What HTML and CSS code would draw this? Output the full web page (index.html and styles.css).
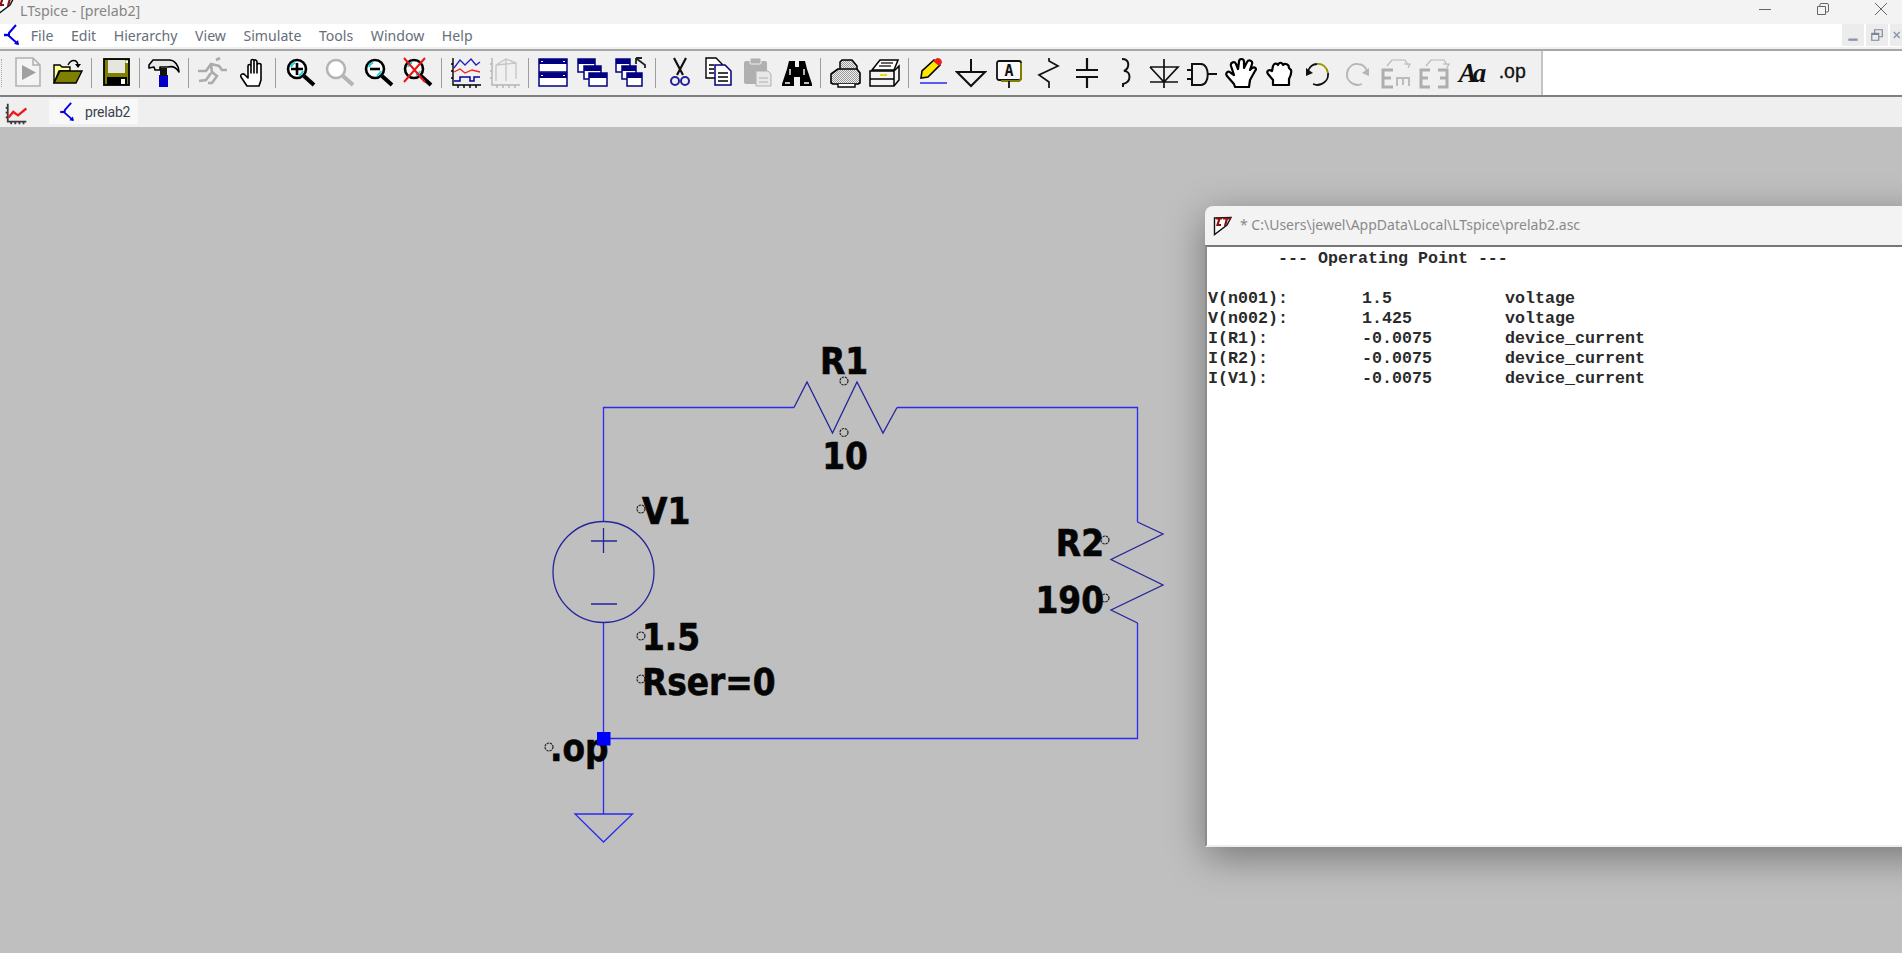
FILE: index.html
```html
<!DOCTYPE html>
<html lang="en">
<head>
<meta charset="utf-8">
<title>LTspice - [prelab2]</title>
<link rel="stylesheet" href="styles.css">
</head>
<body>
<svg class="defs" width="0" height="0" aria-hidden="true">
  <defs>
    <pattern id="dither" width="2" height="2" patternUnits="userSpaceOnUse">
      <rect width="2" height="2" fill="#eee"/>
      <rect width="1" height="1" fill="#999"/>
      <rect x="1" y="1" width="1" height="1" fill="#999"/>
    </pattern>
    <symbol id="transistor" viewBox="0 0 16 22">
      <path d="M0 11 H5" fill="none" stroke="#0000e0" stroke-width="2.4"/>
      <path d="M12 1 L5 9 V12 L14 20" fill="none" stroke="#0000e0" stroke-width="2"/>
      <path d="M10 20 L15 21 L14 16 Z" fill="#0000e0"/>
    </symbol>
    <symbol id="lt-logo" viewBox="0 0 20 20">
      <path d="M1.5 2 V18.5 L14 9 L18 1.5 Z" fill="#fff" stroke="#111" stroke-width="1.4"/>
      <path d="M3 2.5 H9 M6.5 2.5 L4.5 9 H8 M10 2.5 H18 M14 2.5 L12 10" fill="none" stroke="#8a1010" stroke-width="2.2"/>
    </symbol>
    <symbol id="lens" viewBox="0 0 32 32">
      <circle cx="13" cy="12" r="9" fill="#fff" stroke="currentColor" stroke-width="2.6"/>
      <path d="M20 19 L30 28" stroke="currentColor" stroke-width="4" fill="none"/>
    </symbol>
    <symbol id="glint" viewBox="0 0 32 32">
      <path d="M7 10 A7 7 0 0 1 11 5.5 M19 14 A7 7 0 0 1 15 18.5" fill="none" stroke="#16d8d8" stroke-width="2"/>
    </symbol>
    <symbol id="hand-open" viewBox="0 0 32 32">
      <path d="M9 29 L3 20 C2 17 5 16 7 18 L10 21 V9 C10 7 13 7 13 9 V16 V4 C13 2 16 2 16 4 V16 V4 C16 2 19 3 19 5 V16 V8 C19 6 23 6 23 8 V23 L21 29 Z" fill="#fff" stroke="#000" stroke-width="1.6" stroke-linejoin="round"/>
    </symbol>
    <symbol id="axes" viewBox="0 0 32 32">
      <path d="M3 1 V28 H31 M3 7 H1 M3 14 H1 M3 21 H1 M8 28 V31 M14 28 V31 M20 28 V31 M26 28 V31" fill="none" stroke="currentColor" stroke-width="1.4"/>
    </symbol>
  </defs>
</svg>

<header class="titlebar">
  <svg class="app-logo" viewBox="0 0 20 20"><use href="#lt-logo"/></svg>
  <span class="app-title">LTspice - [prelab2]</span>
  <div class="win-controls">
    <svg class="win-btn" viewBox="0 0 12 12"><path d="M0 6.5 H12" stroke="#666" fill="none"/></svg>
    <svg class="win-btn" viewBox="0 0 12 12"><path d="M.5 3.5 H8.5 V11.5 H.5 Z M3 3 V1.5 Q3 .5 4 .5 H10 Q11.5 .5 11.5 2 V8 Q11.5 9 10 9 H9" stroke="#666" fill="none"/></svg>
    <svg class="win-btn" viewBox="0 0 12 12"><path d="M0 0 L12 12 M12 0 L0 12" stroke="#666" fill="none"/></svg>
  </div>
</header>

<nav class="menubar">
  <svg class="menu-logo"><use href="#transistor"/></svg>
  <span class="menu-item">File</span>
  <span class="menu-item">Edit</span>
  <span class="menu-item">Hierarchy</span>
  <span class="menu-item">View</span>
  <span class="menu-item">Simulate</span>
  <span class="menu-item">Tools</span>
  <span class="menu-item">Window</span>
  <span class="menu-item">Help</span>
  <div class="mdi-controls">
    <span class="mdi-btn"><svg viewBox="0 0 12 12"><path d="M2 10 H10" stroke="#8b97a8" stroke-width="2"/></svg></span>
    <span class="mdi-btn"><svg viewBox="0 0 12 12"><path d="M1.5 4.5 H7.5 V10.5 H1.5 Z M1.5 5.5 H7.5 M4 4 V1.5 H10.5 V7.5 H8" stroke="#7b8798" fill="none"/></svg></span>
    <span class="mdi-btn mdi-close"><svg viewBox="0 0 12 12"><path d="M1 2 L9 10 M9 2 L1 10" stroke="#8b97a8" stroke-width="2"/></svg></span>
  </div>
</nav>

<div class="toolbar">
  <div class="tools">
    <span class="grip"></span>
    <span class="btn"><svg viewBox="0 0 32 32"><path d="M4 1 H21 L28 8 V29 H4 Z M21 1 V8 H28" fill="#f4f4f4" stroke="#b0b0b0" stroke-width="1.5"/><path d="M10 8 L24 15.5 L10 23 Z" fill="#a0a0a0"/></svg></span>
    <span class="btn"><svg viewBox="0 0 32 32"><path d="M3 26 V8 H9 L11 10 H19 V14 H8 Z" fill="#ffff99" stroke="#000" stroke-width="1.4"/><path d="M3 26 L9 14 H31 L25 26 Z" fill="#808000" stroke="#000" stroke-width="1.4"/><path d="M17 8 C20 2 26 2 27 8" fill="none" stroke="#000" stroke-width="1.4"/><path d="M24 7 L30 7 L27 11 Z" fill="#000"/></svg></span>
    <span class="sep"></span>
    <span class="btn"><svg viewBox="0 0 32 32"><rect x="4" y="2" width="25" height="26" fill="#808000" stroke="#000" stroke-width="1.8"/><rect x="8" y="3" width="17" height="13" fill="#e6e6e0"/><rect x="25.5" y="3.5" width="2.5" height="2.5" fill="#fff"/><rect x="7" y="20" width="20" height="8" fill="#000"/><rect x="21" y="22" width="4" height="5" fill="#fff"/></svg></span>
    <span class="sep"></span>
    <span class="btn"><svg viewBox="0 0 32 32"><rect x="11" y="18" width="9" height="12" fill="#0000c8"/><rect x="12" y="11" width="7" height="8" fill="#111"/><path d="M1 8 L5 3 H21 C27 3 31 9 31 15 C28 10 24 9 20 10 H12 V13 H7 L6 10 L1 11 Z" fill="#e8e8e8" stroke="#000" stroke-width="1.6" stroke-linejoin="round"/></svg></span>
    <span class="sep"></span>
    <span class="btn"><svg viewBox="0 0 32 32"><path d="M1 14 L9 14 L14 7 L22 9 L25 13 H30 M19 3 L23 1 M14 8 L15 15 L20 19 L15 26 L11 26 M14 16 L9 23 L2 24" fill="none" stroke="#ababab" stroke-width="2.6"/></svg></span>
    <span class="btn"><svg viewBox="-2 0 32 32"><use href="#hand-open" width="32" height="32"/></svg></span>
    <span class="sep"></span>
    <span class="btn btn-black"><svg viewBox="0 0 32 32"><use href="#lens"/><use href="#glint"/><path d="M7 12 H19 M13 6 V18" stroke="#000" stroke-width="2.6"/></svg></span>
    <span class="btn btn-gray"><svg viewBox="0 0 32 32"><use href="#lens"/></svg></span>
    <span class="btn btn-black"><svg viewBox="0 0 32 32"><use href="#lens"/><use href="#glint"/><path d="M8 12 H18" stroke="#000" stroke-width="2.6"/></svg></span>
    <span class="btn btn-black"><svg viewBox="0 0 32 32"><use href="#lens"/><use href="#glint"/><path d="M3 1 L24 25 M24 1 L3 25" stroke="#f01010" stroke-width="2"/></svg></span>
    <span class="sep"></span>
    <span class="btn btn-black"><svg viewBox="0 0 32 32"><use href="#axes"/><path d="M4 11 L10 3 L15 8 L21 2 L26 8 L30 5" fill="none" stroke="#2020c0" stroke-width="1.3"/><path d="M4 15 L10 12 L15 16 L22 13 L30 15" fill="none" stroke="#f02020" stroke-width="1.3"/><path d="M4 24 H10 V20 H20 V24 H24 V20 H30" fill="none" stroke="#0000a0" stroke-width="1.5"/></svg></span>
    <span class="btn btn-gray"><svg viewBox="0 0 32 32"><use href="#axes"/><path d="M7 24 V8 L17 2 L27 6 V22 M7 8 L27 6 M17 2 V24" fill="none" stroke="#c4c4c4" stroke-width="1.3"/></svg></span>
    <span class="sep"></span>
    <span class="btn"><svg viewBox="0 0 32 32"><rect x="2" y="2" width="28" height="13" fill="#fff" stroke="#000080" stroke-width="1.5"/><rect x="2" y="16" width="28" height="13" fill="#fff" stroke="#000080" stroke-width="1.5"/><rect x="2" y="2" width="28" height="5" fill="#000080"/><rect x="2" y="16" width="28" height="5" fill="#000080"/><path d="M4 4.5 H6 M26 4.5 H28 M4 18.5 H6 M26 18.5 H28" stroke="#fff"/></svg></span>
    <span class="btn"><svg viewBox="0 0 32 32"><rect x="2" y="2" width="17" height="13" fill="#fff" stroke="#000080" stroke-width="1.5"/><rect x="2" y="2" width="17" height="5" fill="#000080"/><rect x="8" y="9" width="17" height="13" fill="#fff" stroke="#000080" stroke-width="1.5"/><rect x="8" y="9" width="17" height="5" fill="#000080"/><rect x="13" y="16" width="18" height="13" fill="#fff" stroke="#000080" stroke-width="1.5"/><rect x="13" y="16" width="18" height="5" fill="#000080"/></svg></span>
    <span class="btn"><svg viewBox="0 0 32 32"><rect x="1" y="2" width="14" height="13" fill="#fff" stroke="#000080" stroke-width="1.5"/><rect x="1" y="2" width="14" height="5" fill="#000080"/><rect x="7" y="9" width="14" height="13" fill="#fff" stroke="#000080" stroke-width="1.5"/><rect x="7" y="9" width="14" height="5" fill="#000080"/><rect x="12" y="16" width="15" height="13" fill="#fff" stroke="#000080" stroke-width="1.5"/><rect x="12" y="16" width="15" height="5" fill="#000080"/><path d="M30 11 L30 8 L22 2 M21 1 H27 M21 1 V7" fill="none" stroke="#222" stroke-width="1.8"/></svg></span>
    <span class="sep"></span>
    <span class="btn"><svg viewBox="0 0 32 32"><path d="M10 1 L19 18 M22 1 L13 18" fill="none" stroke="#111" stroke-width="2.2"/><circle cx="11" cy="24" r="4" fill="none" stroke="#2020a0" stroke-width="2"/><circle cx="21" cy="24" r="4" fill="none" stroke="#2020a0" stroke-width="2"/></svg></span>
    <span class="btn"><svg viewBox="0 0 32 32"><path d="M3 1 H13 L19 7 V21 H3 Z" fill="#fff" stroke="#000" stroke-width="1.4"/><path d="M6 8 H11 M6 12 H11 M6 16 H11" stroke="#000" stroke-width="1.3"/><path d="M12 8 H22 L28 14 V28 H12 Z" fill="#fff" stroke="#000080" stroke-width="1.5"/><path d="M15 16 H25 M15 20 H25 M15 24 H25" stroke="#000" stroke-width="1.3"/></svg></span>
    <span class="btn"><svg viewBox="0 0 32 32"><rect x="2" y="4" width="23" height="23" rx="2" fill="#b0b0b0"/><rect x="8" y="1" width="11" height="6" rx="1" fill="#b0b0b0" stroke="#f0f0f0"/><path d="M14 14 H26 L29 17 V29 H14 Z" fill="#e8e8e8" stroke="#b0b0b0"/><path d="M17 21 H26 M17 25 H26" stroke="#b0b0b0"/></svg></span>
    <span class="btn"><svg viewBox="0 0 32 32"><path d="M8 4 H14 V10 H18 V4 H24 L26 12 L31 27 V29 H19 V20 H13 V29 H1 V27 L6 12 Z" fill="#000"/><path d="M9 12 V18 M23 12 V18 M4 26 H9 M23 26 H28" stroke="#fff" stroke-width="1.4"/></svg></span>
    <span class="sep"></span>
    <span class="btn"><svg viewBox="0 0 32 32"><path d="M11 14 V5 L13 3 H23 L28 9 V15 Z" fill="url(#dither)" stroke="#000" stroke-width="1.5" stroke-linejoin="round"/><path d="M2 26 V17 L9 12 H28 L31 16 V26 L29 27 H4 Z" fill="url(#dither)" stroke="#000" stroke-width="1.6" stroke-linejoin="round"/><path d="M9 27 V30 H26 V27" fill="#fff" stroke="#000" stroke-width="1.4"/></svg></span>
    <span class="btn"><svg viewBox="0 0 32 32"><path d="M4 13 L12 3 H30 L26 13 Z" fill="#fff" stroke="#000" stroke-width="1.5"/><path d="M13 6 H25 M11 9 H23" stroke="#333" stroke-width="1.5"/><path d="M2 14 H26 L31 9 V23 L26 29 H2 Z M26 14 V29 M2 22 H26" fill="#f4f4f4" stroke="#000" stroke-width="1.5"/><path d="M12 18 H19" stroke="#e8d810" stroke-width="2"/></svg></span>
    <span class="sep"></span>
    <span class="btn btn-n"><svg viewBox="0 0 32 32"><path d="M5 21 L6 14 L18 3 L24 8 L12 20 Z" fill="#ffe800" stroke="#000" stroke-width="1.6"/><path d="M17 4 L21 1 Q26 1 26 6 L23 9 Z" fill="#f02020"/><path d="M4 26 H31" stroke="#1a1af0" stroke-width="1.4"/></svg></span>
    <span class="btn btn-n"><svg viewBox="0 0 32 32"><path d="M16 2 V15 M2 15 H30 L16 29 Z" fill="none" stroke="#111" stroke-width="2"/></svg></span>
    <span class="btn btn-n"><svg viewBox="0 0 32 32"><rect x="4" y="4" width="24" height="19" rx="2" fill="#f8f8f8" stroke="#111" stroke-width="1.8"/><path d="M28 6 V22 L26 24 H8" fill="none" stroke="#808000" stroke-width="2"/><text class="label-a" x="16" y="19" text-anchor="middle">A</text><path d="M16 24 V31" stroke="#111" stroke-width="1.8"/></svg></span>
    <span class="btn btn-n"><svg viewBox="0 0 32 32"><path d="M17 1 V4 L26 9 L7 18 L17 25 V31" fill="none" stroke="#111" stroke-width="1.7"/></svg></span>
    <span class="btn btn-n"><svg viewBox="0 0 32 32"><path d="M16 1 V13 M5 13 H27 M5 20 H27 M16 20 V31" fill="none" stroke="#111" stroke-width="2.2"/></svg></span>
    <span class="btn btn-n"><svg viewBox="0 0 32 32"><path d="M13 2 C21 2 21 11 15 14 C22 14 23 25 14 27 V30" fill="none" stroke="#111" stroke-width="2"/></svg></span>
    <span class="btn btn-n"><svg viewBox="0 0 32 32"><path d="M16 2 V31 M2 10 H30 L16 25 L2 10 M2 25 H30" fill="none" stroke="#111" stroke-width="1.7"/></svg></span>
    <span class="btn btn-n"><svg viewBox="0 0 32 32"><path d="M6 7 H15 C24 7 24 28 15 28 H6 Z" fill="none" stroke="#111" stroke-width="2"/><path d="M1 13 H6 M1 22 H6 M22 17 H31" stroke="#111" stroke-width="2"/></svg></span>
    <span class="btn btn-n"><svg viewBox="0 0 32 32"><path d="M10 30 L9 27 L2 19 C0 16 3 13 6 16 L9 18 L6 9 C5 5 10 4 11 7 L13 12 L14 5 C14 1 19 1 19 5 L19 11 L22 5 C24 2 28 4 27 7 L25 13 L27 11 C30 9 32 12 30 14 L25 23 L24 30 Z" fill="#fff" stroke="#000" stroke-width="2.2" stroke-linejoin="round"/></svg></span>
    <span class="btn btn-n"><svg viewBox="0 0 32 32"><path d="M9 28 V23 L4 17 C2 14 5 12 8 14 L9 9 C10 6 13 6 14 8 C15 5 18 5 19 8 C21 6 25 7 25 11 L27 13 C28 16 26 20 25 22 V28 Z" fill="#fff" stroke="#000" stroke-width="2.2" stroke-linejoin="round"/></svg></span>
    <span class="btn btn-n"><svg viewBox="0 0 32 32"><path d="M6 14 C8 9 12 7 15 7" fill="none" stroke="#111" stroke-width="1.8"/><path d="M15 7 C20 6 25 10 26 16" fill="none" stroke="#a09000" stroke-width="1.8"/><path d="M26 16 C27 23 21 28 15 28 L11 27" fill="none" stroke="#111" stroke-width="1.8"/><path d="M4 11 V19 L11 16 Z" fill="#111"/></svg></span>
    <span class="btn btn-n"><svg viewBox="0 0 32 32"><path d="M26 14 C24 9 20 7 17 7 C12 6 7 10 6 16 C5 23 11 28 17 28 L21 27" fill="none" stroke="#b4b4b4" stroke-width="1.8"/><path d="M28 11 V19 L21 16 Z" fill="#b4b4b4"/></svg></span>
    <span class="btn btn-n"><svg viewBox="0 0 32 32"><path d="M14 13 H4 V30 H14 M4 21 H12" fill="none" stroke="#aeaeae" stroke-width="3"/><path d="M18 29 V21 H30 V29 M24 21 V28" fill="none" stroke="#bcbcbc" stroke-width="2"/><path d="M8 9 L13 3 H26 L29 8 M25 7 H31 L29 11" fill="none" stroke="#b8b8b8" stroke-width="1.2"/></svg></span>
    <span class="btn btn-n"><svg viewBox="0 0 32 32"><path d="M12 13 H3 V30 H12 M3 21 H10 M20 13 H29 V30 H20 M29 21 H22" fill="none" stroke="#aeaeae" stroke-width="3"/><path d="M8 9 L13 3 H26 L29 8 M25 7 H31 L29 11" fill="none" stroke="#b8b8b8" stroke-width="1.2"/></svg></span>
    <span class="btn btn-n btn-aa">Aa</span>
    <span class="btn btn-n btn-op">.op</span>
  </div>
  <div class="toolbar-rest"></div>
</div>

<div class="tabbar">
  <svg class="tab-wave" viewBox="0 0 32 32"><path d="M4 1 V27 H31 M4 7 H1 M4 14 H1 M4 21 H1 M9 27 V31 M15 27 V31 M21 27 V31 M27 27 V31" fill="none" stroke="#3a3a3a" stroke-width="2.6"/><path d="M5 21 L12 13 L19 18 L31 8" fill="none" stroke="#f01818" stroke-width="3.4"/></svg>
  <div class="tab">
    <svg class="tab-logo"><use href="#transistor"/></svg>
    <span class="tab-label">prelab2</span>
  </div>
</div>

<main class="workspace">
  <svg class="schematic" viewBox="0 127 1902 826" width="1902" height="826">
    <path class="wire" d="M794 407.5 H603.5 V522 M603.5 622 V814 M897 407.5 H1137.5 V522 M1137.5 623 V738.5 H603.5"/>
    <path class="part" d="M794 407.5 L807 382 L832.5 433 L857 382 L883 433 L897 407.5"/>
    <path class="part" d="M1137.5 522 L1163 534 L1111 559.5 L1163 585 L1111 610 L1137.5 623"/>
    <circle class="part" cx="603.5" cy="572" r="50.5"/>
    <path class="part" d="M591 541 H617 M603.5 528 V553 M591 604 H617"/>
    <path class="wire" d="M575 814 H632.5 L603.5 842 Z"/>
    <g class="anchors">
      <circle cx="844" cy="381" r="4"/>
      <circle cx="844" cy="432.5" r="4"/>
      <circle cx="641" cy="509" r="4"/>
      <circle cx="641" cy="636" r="4"/>
      <circle cx="641" cy="679" r="4"/>
      <circle cx="549" cy="747" r="4"/>
      <circle cx="1105" cy="540" r="4"/>
      <circle cx="1105" cy="598" r="4"/>
    </g>
    <text class="net" x="844" y="374" text-anchor="middle">R1</text>
    <text class="net" x="845" y="469" text-anchor="middle">10</text>
    <text class="net" x="642" y="524">V1</text>
    <text class="net" x="642" y="650">1.5</text>
    <text class="net" x="642" y="695">Rser=0</text>
    <text class="net" x="550" y="761">.op</text>
    <text class="net" x="1104" y="556" text-anchor="end">R2</text>
    <text class="net" x="1104" y="613" text-anchor="end">190</text>
    <rect class="junction" x="597" y="732" width="13.5" height="13.5"/>
  </svg>

  <section class="output-window">
    <div class="output-title">
      <svg class="output-logo" viewBox="0 0 20 20"><use href="#lt-logo"/></svg>
      <span class="output-path">* C:\Users\jewel\AppData\Local\LTspice\prelab2.asc</span>
    </div>
    <div class="output-body">
      <div class="output-head">       --- Operating Point ---</div>
      <div class="output-table">
        <span>V(n001):</span><span>1.5</span><span>voltage</span>
        <span>V(n002):</span><span>1.425</span><span>voltage</span>
        <span>I(R1):</span><span>-0.0075</span><span>device_current</span>
        <span>I(R2):</span><span>-0.0075</span><span>device_current</span>
        <span>I(V1):</span><span>-0.0075</span><span>device_current</span>
      </div>
    </div>
  </section>
</main>
</body>
</html>
```
FILE: styles.css
```css
* { box-sizing: border-box; }
html, body { margin: 0; height: 953px; width: 1902px; overflow: hidden; background: #bfbfbf; }
body { display: flex; flex-direction: column; font-family: "Noto Sans", "Open Sans", sans-serif; }
.defs { position: absolute; }

.titlebar { height: 24px; flex: none; background: #f3f3f3; display: flex; align-items: center; overflow: hidden; }
.app-logo { width: 20px; height: 20px; margin: -12px 0 0 -4px; flex: none; }
.app-title { margin: -4px 0 0 4px; font-size: 14.2px; color: #858585; }
.win-controls { margin-left: auto; display: flex; gap: 46px; padding-right: 15px; margin-top: -6px; }
.win-btn { width: 12px; height: 12px; display: block; }

.menubar { height: 25px; flex: none; background: #fff; display: flex; align-items: flex-start; border-bottom: 2px solid #f0f0f0; position: relative; }
.menu-logo { width: 16px; height: 22px; margin-left: 4px; margin-right: 2px; flex: none; }
.menu-item { padding: 0 8.8px; font-size: 14.1px; line-height: 23px; color: #666e7a; }
.mdi-controls { margin-left: auto; display: flex; gap: 2px; }
.mdi-btn { width: 22px; height: 22px; background: #ececec; display: flex; align-items: center; justify-content: center; }
.mdi-btn svg { width: 14px; height: 14px; }
.mdi-close { width: 12px; justify-content: flex-start; padding-left: 3px; }

.toolbar { height: 48px; flex: none; display: flex; border-top: 2px solid #a6a6a6; border-bottom: 2px solid #7f7f7f; background: #f0f0f0; }
.tools { display: flex; align-items: center; padding: 0 10px 0 8.5px; position: relative; }
.grip { position: absolute; left: 1px; top: 8px; height: 28px; width: 1px; border-left: 1px dotted #aaa; }
.btn { width: 39px; height: 44px; flex: none; display: flex; align-items: center; justify-content: center; }
.btn svg { width: 32px; height: 32px; display: block; }
.btn-n { width: 38.6px; }
.btn-black { color: #000; }
.btn-gray { color: #b4b4b4; }
.btn-aa { font: italic bold 27px "Liberation Serif", serif; letter-spacing: -4px; color: #111; padding-right: 4px; }
.btn-op { font: 19.5px "Liberation Sans", sans-serif; color: #111; -webkit-text-stroke: .3px #111; padding-bottom: 4px; padding-left: 2px; }
.label-a { font: bold 15px "DejaVu Sans Mono", monospace; fill: #111; }
.sep { width: 9.5px; height: 30px; flex: none; position: relative; }
.sep::after { content: ""; position: absolute; left: 4px; top: 0; width: 1.4px; height: 100%; background: #9c9c9c; }
.toolbar-rest { flex: 1; background: #fff; border-left: 2px solid #c4c4c4; }

.tabbar { height: 30px; flex: none; background: #efefef; display: flex; align-items: flex-start; position: relative; }
.tab-wave { width: 22px; height: 22px; margin: 6px 0 0 5px; flex: none; }
.tab { margin: 2px 0 0 22px; width: 89px; height: 25px; background: #f8f8f8; display: flex; align-items: center; padding-left: 11px; }
.tab-logo { width: 15px; height: 20px; flex: none; }
.tab-label { margin-left: 10px; font: 14px/1 "Roboto", sans-serif; letter-spacing: -.2px; color: #3a4250; }

.workspace { flex: 1; position: relative; overflow: hidden; background: #bfbfbf; }
.schematic { display: block; }
.wire { fill: none; stroke: #2a2af0; stroke-width: 1.3; }
.part { fill: none; stroke: #26269c; stroke-width: 1.3; }
.anchors circle { fill: none; stroke: #222; stroke-width: 1.2; stroke-dasharray: 2.4 .8; }
.net { font-family: "DejaVu Sans", sans-serif; font-weight: bold; font-stretch: condensed; font-size: 36.5px; fill: #050505; stroke: #050505; stroke-width: .6px; }
.junction { fill: #0000ff; }

.output-window { position: absolute; left: 1205px; top: 79px; width: 900px; height: 641px; background: #f3f3f3; border-radius: 8px 8px 0 0; box-shadow: 0 10px 38px rgba(0, 0, 0, .38); display: flex; flex-direction: column; }
.output-title { height: 37px; flex: none; display: flex; align-items: center; padding-left: 8px; margin-bottom: 2px; }
.output-logo { width: 20px; height: 20px; flex: none; margin-top: 3px; }
.output-path { margin-left: 7px; font-size: 14px; color: #8a8a8a; }
.output-body { flex: 1; background: #fff; border-top: 2px solid #777; border-left: 2px solid #8c8c8c; border-bottom: 2px solid #eee; padding: 2px 0 0 1px; font: bold 16.67px/20px "Liberation Mono", monospace; color: #2a2a2a; }
.output-head { white-space: pre; height: 40px; }
.output-table { display: grid; grid-template-columns: 154px 143px 1fr; }
```
